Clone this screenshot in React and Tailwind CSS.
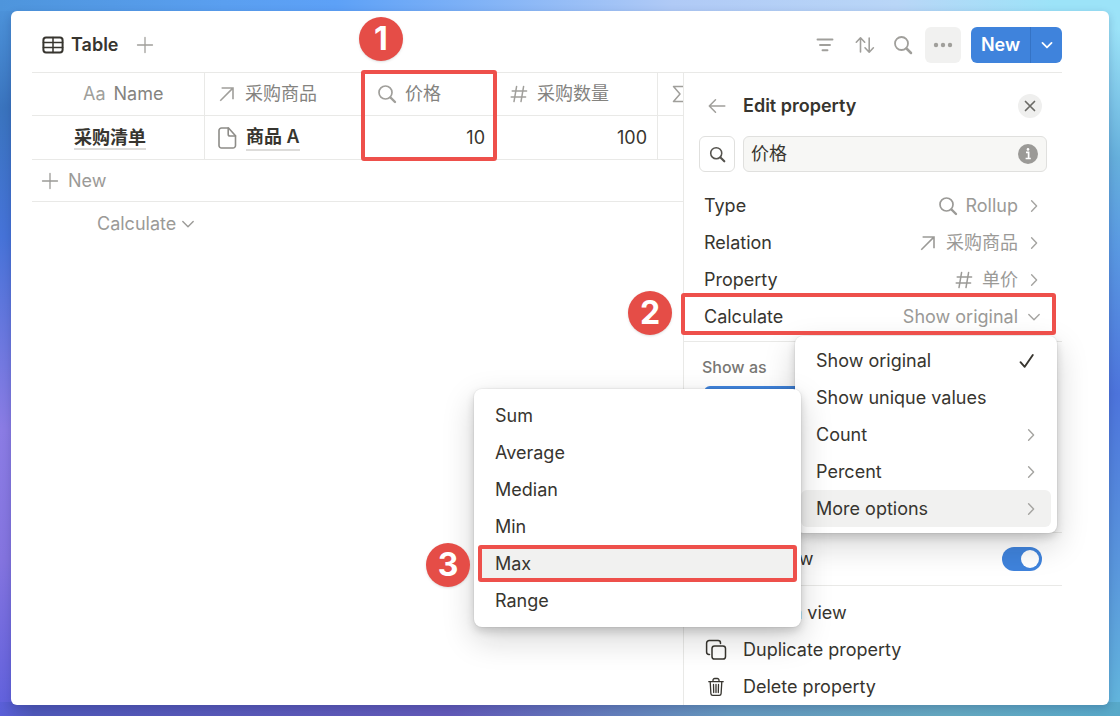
import React from "react";

function Svg({ className, children, box = 20, width = 1.5 }) {
  return (
    <svg
      className={className}
      viewBox={`0 0 ${box} ${box}`}
      fill="none"
      stroke="currentColor"
      strokeWidth={width}
      strokeLinecap="round"
      strokeLinejoin="round"
      aria-hidden="true"
    >
      {children}
    </svg>
  );
}

const SearchIcon = ({ className = "size-5", width = 1.7 }) => (
  <Svg className={className} width={width}>
    <circle cx="8.5" cy="8.5" r="6.5" />
    <path d="M13.5 13.5l4.5 4.5" strokeWidth={width + 0.7} />
  </Svg>
);

const RelationIcon = ({ className = "size-5" }) => (
  <Svg className={className} width={1.6}>
    <path d="M3.8 16.2L15.6 4.400M5.400 4h10.600V14.400" strokeLinecap="square" strokeLinejoin="miter" />
  </Svg>
);

const HashIcon = ({ className = "size-5" }) => (
  <Svg className={className} width={1.5}>
    <path d="M7.6 2.4L5 17.6M14.6 2.4L12 17.6M3.2 7h14.4M2.2 13h14.4" />
  </Svg>
);

const PlusIcon = () => (
  <Svg className="size-5" width={1.3}>
    <path d="M10 2.5v15M2.5 10h15" />
  </Svg>
);

const ChevronRight = ({ className = "size-4" }) => (
  <Svg className={className} box={16} width={1.4}>
    <path d="M5.600 2.800L10.600 8 5.600 13.200" />
  </Svg>
);

const ChevronDown = ({ className = "size-4", width = 1.4 }) => (
  <Svg className={className} box={16} width={width}>
    <path d="M2.8 5.6L8 10.8l5.2-5.2" />
  </Svg>
);

const TableIcon = () => (
  <Svg className="size-[22px]" box={22} width={2}>
    <rect x="1.4" y="3.6" width="19.2" height="14.8" rx="2.6" />
    <path d="M1.4 8.400h19.2M1.4 13.400h19.2M11 3.600v14.800" strokeWidth="1.500" />
  </Svg>
);

const PageIcon = () => (
  <Svg className="size-[22px]" box={22} width={1.6}>
    <path d="M5.500 1h7L19.500 8.800v9.700A2.500 2.500 0 0 1 17 21H5.500A2.500 2.500 0 0 1 3 18.500v-15A2.500 2.500 0 0 1 5.500 1z" />
    <path d="M12.200 1v6.200A1.800 1.800 0 0 0 14 9h5.500" />
  </Svg>
);

const CopyIcon = () => (
  <Svg className="size-[22px]" box={22} width={1.5}>
    <rect x="7" y="7" width="13.500" height="13" rx="2.600" />
    <path d="M4.500 15.500H4A2.400 2.400 0 0 1 1.600 13.100V4.200A2.600 2.600 0 0 1 4.200 1.600h8.900a2.400 2.400 0 0 1 2.400 2.400v.5" />
  </Svg>
);

const TrashIcon = () => (
  <Svg className="size-5" width={1.3}>
    <path d="M2.800 4.700h14.400M7 4.500V3.200A1.700 1.700 0 0 1 8.700 1.500h2.600A1.700 1.700 0 0 1 13 3.200v1.300M4.200 4.900l.7 11.700a1.800 1.800 0 0 0 1.800 1.700h6.600a1.800 1.800 0 0 0 1.800-1.700l.7-11.700M7.500 7.500l.2 8M10 7.500v8M12.500 7.500l-.2 8" />
  </Svg>
);

const Badge = ({ n, className }) => (
  <span
    className={`absolute flex size-11 items-center justify-center rounded-full bg-[#e54d47] text-[32px] font-bold leading-none text-white shadow-sm ${className}`}
  >
    {n}
  </span>
);

const Frame = ({ className }) => (
  <span className={`pointer-events-none absolute rounded-[3px] border-4 border-[#ee504b] ${className}`} />
);

function HeaderCell({ icon, children, className = "", mark }) {
  return (
    <th scope="col" className={`relative h-[43px] border-b border-[#e9e9e7] p-0 pl-3 font-normal text-[#84837f] ${className}`}>
      <div className="flex items-center gap-2">
        <span className="shrink-0 text-[#a09f9b]">{icon}</span>
        <span className="whitespace-nowrap">{children}</span>
      </div>
      {mark}
    </th>
  );
}

function DataTable() {
  return (
    <div className="min-w-0 flex-1">
      <table className="w-full table-fixed border-separate border-spacing-0 text-left">
        <colgroup>
          <col className="w-[173px]" />
          <col className="w-[160px]" />
          <col className="w-[132px]" />
          <col className="w-[161px]" />
          <col />
        </colgroup>
        <thead>
          <tr>
            <th scope="col" className="h-[43px] border-r border-b border-[#e9e9e7] p-0 pl-[51px] font-normal text-[#84837f]">
              <span className="mr-2 text-[#a09f9b]">Aa</span>Name
            </th>
            <HeaderCell icon={<RelationIcon />}>采购商品</HeaderCell>
            <HeaderCell
              icon={<SearchIcon />}
              mark={
                <>
                  <Frame className="-top-[3px] -left-1 h-[91px] w-[136px]" />
                  <Badge n="1" className="-top-14 -left-1.5" />
                </>
              }
            >
              价格
            </HeaderCell>
            <HeaderCell icon={<HashIcon />} className="border-r">
              采购数量
            </HeaderCell>
            <HeaderCell
              className="overflow-hidden"
              icon={
                <Svg className="size-5">
                  <path d="M15 5V2.500H3.500L10 10l-6.500 7.500H15V15" />
                </Svg>
              }
            />
          </tr>
        </thead>
        <tbody className="text-[#37352f]">
          <tr>
            <td className="h-11 border-r border-b border-[#e9e9e7] p-0 pl-[42px] font-semibold">
              <span className="border-b-2 border-[#dddcda]">采购清单</span>
            </td>
            <td className="h-11 border-b border-[#e9e9e7] p-0 pl-[11px] font-semibold">
              <div className="flex items-center gap-2">
                <span className="text-[#8d8c88]"><PageIcon /></span>
                <span className="border-b-2 border-[#dddcda] leading-6">商品 A</span>
              </div>
            </td>
            <td className="h-11 border-b border-[#e9e9e7] p-0 pr-3 text-right">10</td>
            <td className="h-11 border-r border-b border-[#e9e9e7] p-0 pr-[10px] text-right">100</td>
            <td className="h-11 border-b border-[#e9e9e7] p-0" />
          </tr>
        </tbody>
      </table>
      <button type="button" className="flex h-[42px] w-full items-center gap-2 border-b border-[#e9e9e7] pl-2 text-[#9b9a97]">
        <PlusIcon />
        New
      </button>
      <button type="button" className="flex h-11 items-center gap-1 pl-[65px] text-[#9b9a97]">
        Calculate
        <ChevronDown />
      </button>
    </div>
  );
}

function PropertyRow({ label, icon, value }) {
  return (
    <button type="button" className="flex h-[37px] w-full items-center pr-5 pl-5 text-left">
      <span className="flex-1">{label}</span>
      <span className="mr-2 flex items-center gap-2 text-[#9b9a97]">
        {icon}
        {value}
      </span>
      <ChevronRight className="size-4 text-[#a5a4a1]" />
    </button>
  );
}

const menuShadow =
  "shadow-[0_0_0_1px_rgba(15,15,15,0.04),0_4px_8px_rgba(15,15,15,0.16),0_12px_32px_rgba(15,15,15,0.18)]";

function AggregateMenu() {
  return (
    <ul role="menu" className={`absolute -top-[101px] right-full z-10 w-[327px] rounded-lg bg-white px-1.5 py-2 ${menuShadow}`}>
      {["Sum", "Average", "Median", "Min", "Max", "Range"].map((item) => (
        <li key={item} role="none" className="relative">
          <button
            type="button"
            role="menuitem"
            className={`flex h-[37px] w-full items-center px-[15px] text-left ${item === "Max" ? "bg-[#f1f1f0]" : ""}`}
          >
            {item}
          </button>
          {item === "Max" && (
            <>
              <Frame className="-inset-x-0.5 inset-y-0" />
              <Badge n="3" className="-top-0.5 right-full mr-2.5" />
            </>
          )}
        </li>
      ))}
    </ul>
  );
}

function CalculateMenu() {
  return (
    <ul role="menu" className={`absolute top-full right-[5px] z-10 mt-px w-[262px] rounded-lg bg-white p-1.5 ${menuShadow}`}>
      {["Show original", "Show unique values", "Count", "Percent", "More options"].map((item, i) => (
        <li key={item} role="none" className="relative">
          <button
            type="button"
            role="menuitem"
            className={`flex h-[37px] w-full items-center justify-between rounded-md pr-3 pl-[15px] text-left ${item === "More options" ? "bg-[#f1f1f0]" : ""}`}
          >
            {item}
            {i === 0 && (
              <Svg className="mr-0.5 size-5" width={1.9}>
                <path d="M3.500 11.200l4.200 4.600L15.800 4" />
              </Svg>
            )}
            {i > 1 && <ChevronRight className="size-4 text-[#a5a4a1]" />}
          </button>
          {item === "More options" && <AggregateMenu />}
        </li>
      ))}
    </ul>
  );
}

function PropertyPanel() {
  return (
    <aside className="w-[379px] shrink-0 border-l border-[#e9e9e7] text-[#37352f]">
      <div className="flex h-[63px] items-center pt-0.5 pr-5 pl-[23px]">
        <button type="button" aria-label="Back" className="text-[#a09f9b]">
          <Svg className="size-5">
            <path d="M17.800 10H2.500M8.500 3.800L2.300 10l6.200 6.200" />
          </Svg>
        </button>
        <h2 className="ml-4 flex-1 font-semibold">Edit property</h2>
        <button type="button" aria-label="Close" className="flex size-6 items-center justify-center rounded-full bg-[#efefee] text-[#6b6a66]">
          <Svg className="size-4" box={16} width={1.7}>
            <path d="M3.500 3.500l9 9M12.500 3.500l-9 9" />
          </Svg>
        </button>
      </div>
      <div className="flex gap-2 pr-[15px] pl-[15px]">
        <button type="button" aria-label="Property icon" className="flex size-9 items-center justify-center rounded-md border border-[#e0e0de] text-[#55534e]">
          <SearchIcon className="size-[17px]" width={1.8} />
        </button>
        <div className="flex h-9 min-w-0 flex-1 items-center rounded-md border border-[#e0e0de] bg-[#f7f7f5] pr-2 pl-[7px]">
          <input type="text" aria-label="Property name" defaultValue="价格" className="min-w-0 flex-1 bg-transparent outline-none" />
          <svg className="size-5" viewBox="0 0 20 20" aria-hidden="true">
            <circle cx="10" cy="10" r="10" fill="#9b9a97" />
            <path d="M8 8.400h2.600v6M7.600 14.500h5.200" stroke="#fff" strokeWidth="1.700" fill="none" />
            <circle cx="10" cy="5.400" r="1.300" fill="#fff" />
          </svg>
        </div>
      </div>
      <div className="mt-[15px]">
        <PropertyRow label="Type" icon={<SearchIcon />} value="Rollup" />
        <PropertyRow label="Relation" icon={<RelationIcon />} value="采购商品" />
        <PropertyRow label="Property" icon={<HashIcon />} value="单价" />
        <div className="relative">
          <button type="button" aria-haspopup="menu" aria-expanded="true" className="flex h-[37px] w-full items-center pr-5 pl-5 text-left">
            <span className="flex-1">Calculate</span>
            <span className="mr-2 text-[#9b9a97]">Show original</span>
            <ChevronDown className="size-4 text-[#a5a4a1]" />
          </button>
          <CalculateMenu />
          <Frame className="-top-[5px] right-1.5 -left-[3px] z-20 h-[42px]" />
          <Badge n="2" className="-top-[7px] right-full mr-3" />
        </div>
      </div>
      <div className="mt-1.5 h-[192px] border-y border-[#e9e9e7] pt-[15px]">
        <h3 className="pl-[18px] text-base leading-5 font-medium text-[#787774]">Show as</h3>
        <div className="mt-[9px] mr-5 ml-5 h-12 rounded-md bg-[#3f83dc]" />
      </div>
      <label className="flex h-[53px] items-center justify-between border-b border-[#e9e9e7] pr-5 pl-5">
        Wrap in view
        <input
          type="checkbox"
          role="switch"
          defaultChecked
          className="h-6 w-10 appearance-none rounded-full bg-[#3f83dc] p-[3px] before:ml-auto before:block before:size-[18px] before:rounded-full before:bg-white"
        />
      </label>
      <div className="pt-2">
        <button type="button" className="flex h-[37px] w-full items-center gap-4 pl-[21px]">
          <Svg className="size-[22px]" box={22}>
            <path d="M1.500 11S5 4.500 11 4.500 20.500 11 20.500 11 17 17.500 11 17.500 1.500 11 1.500 11zM3 3l16 16" />
          </Svg>
          Hide in view
        </button>
        <button type="button" className="flex h-[37px] w-full items-center gap-4 pl-[21px]">
          <span className="flex w-[22px] justify-center"><CopyIcon /></span>
          Duplicate property
        </button>
        <button type="button" className="flex h-[37px] w-full items-center gap-4 pl-[21px]">
          <span className="flex w-[22px] justify-center"><TrashIcon /></span>
          Delete property
        </button>
      </div>
    </aside>
  );
}

export default function App() {
  return (
    <div className="min-h-screen p-[11px] font-['Inter','Noto_Sans_CJK_SC',sans-serif] text-[18px] leading-6 [background:linear-gradient(90deg,#4e95dc,#5a9ff0_20%,#5da1f7_30%,#b0caf6_60%,#b9d6f7_80%,#9ce3f8_94%,#9ce3f8)_top/100%_11px_no-repeat,linear-gradient(90deg,#5a5fd8,#4f58b8_3%,#6259b8_40%,#6597bd_65%,#64a8c0_85%,#58a9c9)_bottom/100%_14px_no-repeat,linear-gradient(180deg,#4e95dc,#3a74be_15%,#4673d8_33%,#8b7ce4_60%,#8474df_78%,#5f60dc)_left/50%_100%_no-repeat,linear-gradient(180deg,#9ce3f8_4%,#66b0dc_22%,#5a9ae2_34%,#4d74dc_55%,#5a98dc_80%,#63b8dc)_right/50%_100%_no-repeat]">
      <main className="rounded-md bg-white pr-[47px] pl-[21px] shadow-[0_3px_8px_rgba(20,30,90,0.22)]">
        <header className="flex items-center border-b border-[#e9e9e7] pt-4 pb-[9px]">
          <button type="button" className="ml-2.5 flex items-center gap-[7px] font-semibold text-[#37352f]">
            <TableIcon />
            Table
          </button>
          <button type="button" aria-label="Add view" className="ml-4 text-[#a09f9b]">
            <PlusIcon />
          </button>
          <div className="ml-auto flex items-center text-[#a09f9b]">
            <button type="button" aria-label="Filter" className="mr-5">
              <Svg className="size-5" width={1.9}>
                <path d="M2.500 4.500h15M5 10h10M7.500 15.300h5" />
              </Svg>
            </button>
            <button type="button" aria-label="Sort" className="mr-[18px]">
              <Svg className="size-5" width={1.6}>
                <path d="M5.500 17V3M1.300 7.200L5.500 2.800l4.200 4.400M14.200 3v14M10 12.800l4.200 4.400 4.200-4.400" />
              </Svg>
            </button>
            <button type="button" aria-label="Search" className="mr-3">
              <SearchIcon width={1.8} />
            </button>
            <button type="button" aria-label="More" className="mr-2.5 flex size-9 items-center justify-center rounded-md bg-[#f1f1f0]">
              <svg className="size-5" viewBox="0 0 20 20" fill="currentColor" aria-hidden="true">
                <circle cx="3" cy="10" r="2.200" />
                <circle cx="10" cy="10" r="2.200" />
                <circle cx="17" cy="10" r="2.200" />
              </svg>
            </button>
            <div className="flex h-9 overflow-hidden rounded-md bg-[#3f83dc] font-semibold text-white">
              <button type="button" className="w-[60px] border-r border-[#3573c5]">New</button>
              <button type="button" aria-label="New from template" className="flex w-[31px] items-center justify-center">
                <ChevronDown className="size-[14px]" width={2} />
              </button>
            </div>
          </div>
        </header>
        <div className="flex">
          <DataTable />
          <PropertyPanel />
        </div>
      </main>
    </div>
  );
}
